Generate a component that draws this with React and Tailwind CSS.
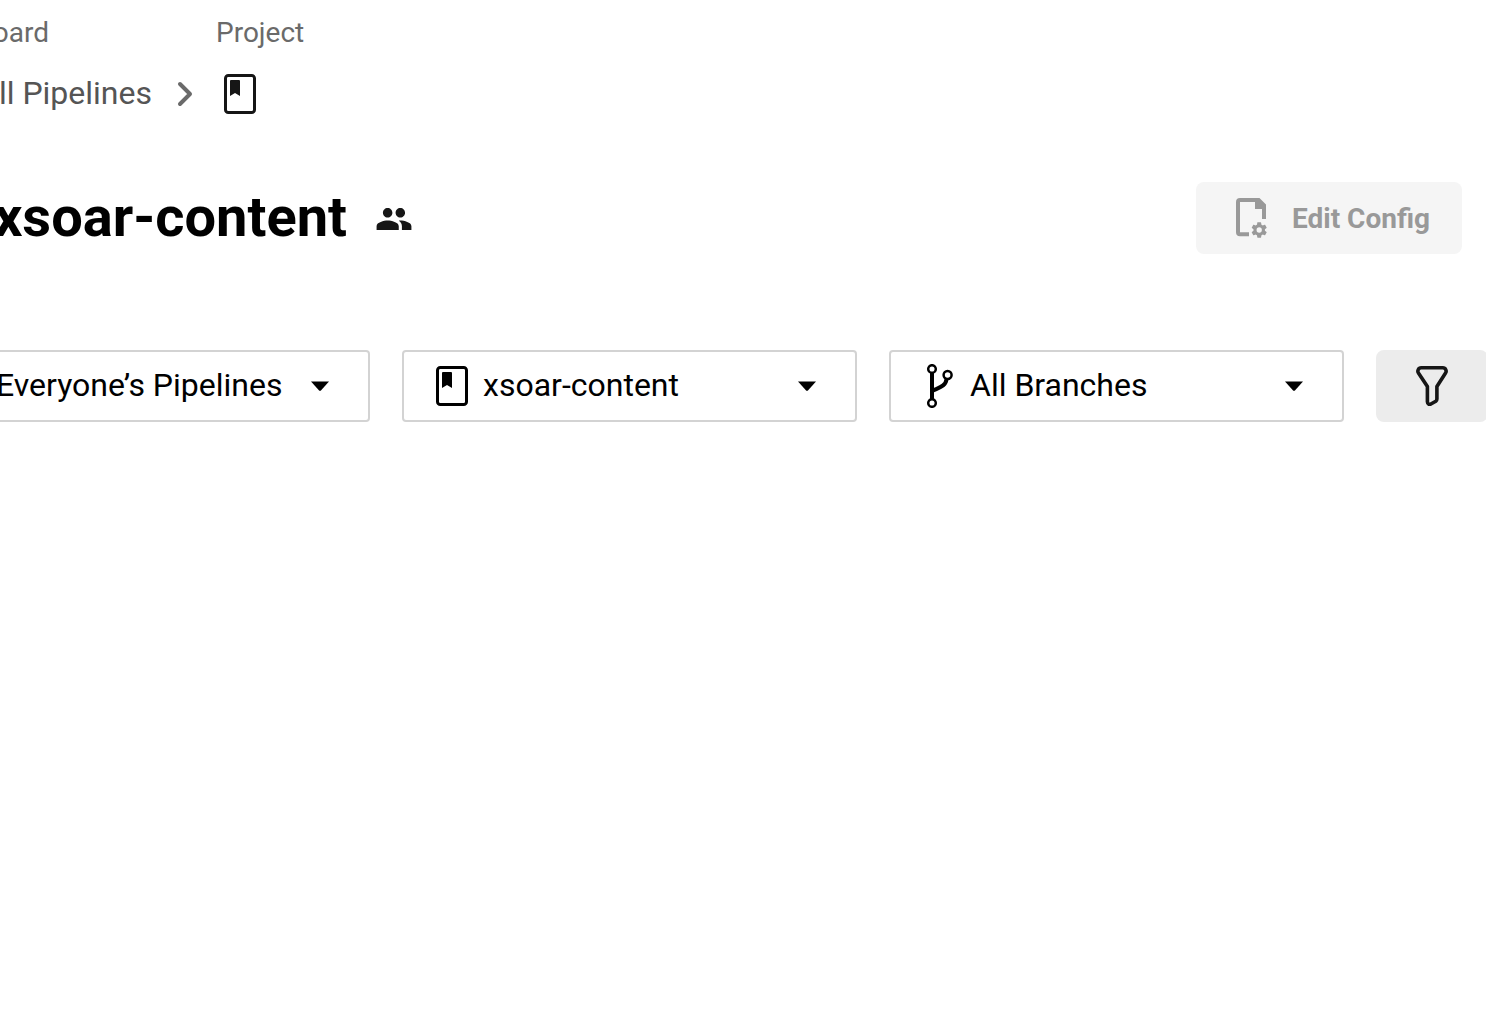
import React from "react";
import { MdPeople } from "react-icons/md";

function BookIcon({ className }) {
  return (
    <svg className={className} width="32" height="40" viewBox="0 0 32 40" aria-hidden="true">
      <rect x="1.5" y="1.5" width="29" height="37" rx="2.8" fill="none" stroke="currentColor" strokeWidth="3" />
      <path d="M7 6h8a1 1 0 0 1 1 1v15l-5-3-5 3V7a1 1 0 0 1 1-1Z" fill="currentColor" />
    </svg>
  );
}

function BranchIcon({ className }) {
  return (
    <svg className={className} width="28" height="44" viewBox="0 0 28 44" fill="none" stroke="currentColor" aria-hidden="true">
      <path d="M6 9v26" strokeWidth="4" />
      <path d="M20.6 15C19.6 22.5 13 23.5 6 27" strokeWidth="4" />
      <circle cx="6" cy="5" r="3.8" strokeWidth="2.5" />
      <circle cx="6" cy="39" r="3.8" strokeWidth="2.5" />
      <circle cx="21.6" cy="11" r="4" strokeWidth="2.5" />
    </svg>
  );
}

function ChevronIcon() {
  return (
    <svg width="16" height="26" viewBox="0 0 16 26" fill="none" stroke="currentColor" strokeWidth="4" strokeLinecap="round" strokeLinejoin="round" aria-hidden="true">
      <path d="M3 3l10 10L3 23" />
    </svg>
  );
}

function CaretIcon() {
  return (
    <svg className="pointer-events-none absolute top-[31px] right-[41px]" width="18" height="10" viewBox="0 0 18 10" aria-hidden="true">
      <path d="M0 0.5h18L9.7 9.8h-1.4Z" fill="currentColor" />
    </svg>
  );
}

function FileGearIcon() {
  return (
    <svg width="32" height="40" viewBox="0 0 32 40" fill="currentColor" aria-hidden="true">
      <path d="M4 0H23.5L30 6.5V21H26V11H19V4H4V34.3H13V38.3H4a4 4 0 0 1-4-4V4a4 4 0 0 1 4-4Z" />
      <g transform="translate(13.6 22.4) scale(0.8)">
        <path d="M19.14 12.94c.04-.3.06-.61.06-.94 0-.32-.02-.64-.07-.94l2.03-1.58a.49.49 0 0 0 .12-.61l-1.92-3.32a.488.488 0 0 0-.59-.22l-2.39.96c-.5-.38-1.03-.7-1.62-.94l-.36-2.54a.484.484 0 0 0-.48-.41h-3.84c-.24 0-.43.17-.47.41l-.36 2.54c-.59.24-1.13.57-1.62.94l-2.39-.96c-.22-.08-.47 0-.59.22L2.74 8.87c-.12.21-.08.47.12.61l2.03 1.58c-.05.3-.09.63-.09.94s.02.64.07.94l-2.03 1.58a.49.49 0 0 0-.12.61l1.92 3.32c.12.22.37.29.59.22l2.39-.96c.5.38 1.03.7 1.62.94l.36 2.54c.05.24.24.41.48.41h3.84c.24 0 .44-.17.47-.41l.36-2.54c.59-.24 1.13-.56 1.62-.94l2.39.96c.22.08.47 0 .59-.22l1.92-3.32c.12-.22.07-.47-.12-.61l-2.01-1.58zM12 15.3a3.3 3.3 0 1 1 0-6.6 3.3 3.3 0 0 1 0 6.6z" />
      </g>
    </svg>
  );
}

function FunnelIcon() {
  return (
    <svg width="32" height="40" viewBox="0 0 32 40" fill="none" stroke="currentColor" strokeWidth="3.6" strokeLinejoin="round" aria-hidden="true">
      <path d="M5.2 1.8H26.8C29.6 1.8 31.1 4.9 29.4 7.3L20.9 20.5V33C20.9 34 20.6 34.6 19.8 35.2L15.3 37.8C13.4 38.9 11.4 38 11.4 35.8V20.5L2.6 7.3C0.9 4.9 2.4 1.8 5.2 1.8Z" />
    </svg>
  );
}

const selectBase =
  "h-18 w-full appearance-none rounded-sm border-2 border-[#d3d3d3] bg-white pb-0.5 text-[32px] leading-10 text-black";

export default function App() {
  return (
    <main className="min-h-screen overflow-hidden bg-white font-['Roboto',sans-serif] text-black">
      <nav aria-label="Breadcrumb" className="grid grid-cols-[216px_1fr] pt-[17px]">
        <span className="flex w-[49px] justify-end text-[28px] leading-8 text-[#6a6a6a]">oard</span>
        <span className="text-[28px] leading-8 text-[#6a6a6a]">Project</span>
        <div className="mt-[23px] flex h-11 items-center text-[#6a6a6a]">
          <a href="#pipelines" className="mr-[25px] flex w-[152px] shrink-0 justify-end pb-0.5 text-[32px] leading-10 whitespace-nowrap text-[#555555]">
            ll Pipelines
          </a>
          <ChevronIcon />
        </div>
        <a href="#project" aria-label="Project" className="mt-[23px] flex h-11 items-center pl-2 text-[#161616]">
          <BookIcon />
        </a>
      </nav>

      <header className="mt-[66px] flex items-center justify-between pr-6">
        <div className="flex items-center gap-7">
          <h1 className="flex w-[347px] justify-end pb-0.5 text-[56px] leading-[70px] font-bold whitespace-nowrap">
            xsoar-content
          </h1>
          <MdPeople className="mt-0.5 size-[38px] text-[#161616]" aria-hidden="true" />
        </div>
        <button type="button" disabled className="flex h-18 items-center gap-6 rounded-lg bg-[#f5f5f5] pr-8 pl-10 text-[28px] font-bold text-[#999999]">
          <FileGearIcon />
          <span className="pt-0.5">Edit Config</span>
        </button>
      </header>

      <section aria-label="Filters" className="mt-24 -mr-0.5 -ml-1.5 flex gap-8">
        <div className="relative w-[376px] shrink-0">
          <select aria-label="Owner" className={selectBase + " pl-0"}>
            <option>Everyone’s Pipelines</option>
          </select>
          <CaretIcon />
        </div>
        <div className="relative flex-1">
          <BookIcon className="pointer-events-none absolute top-4 left-[34px]" />
          <select aria-label="Project" className={selectBase + " pl-[79px]"}>
            <option>xsoar-content</option>
          </select>
          <CaretIcon />
        </div>
        <div className="relative flex-1">
          <BranchIcon className="pointer-events-none absolute top-3.5 left-[37px]" />
          <select aria-label="Branch" className={selectBase + " pl-[79px]"}>
            <option>All Branches</option>
          </select>
          <CaretIcon />
        </div>
        <button type="button" aria-label="Filter" className="flex h-18 w-28 shrink-0 items-center justify-center rounded-lg bg-[#ececec] text-[#161616]">
          <FunnelIcon />
        </button>
      </section>
    </main>
  );
}
